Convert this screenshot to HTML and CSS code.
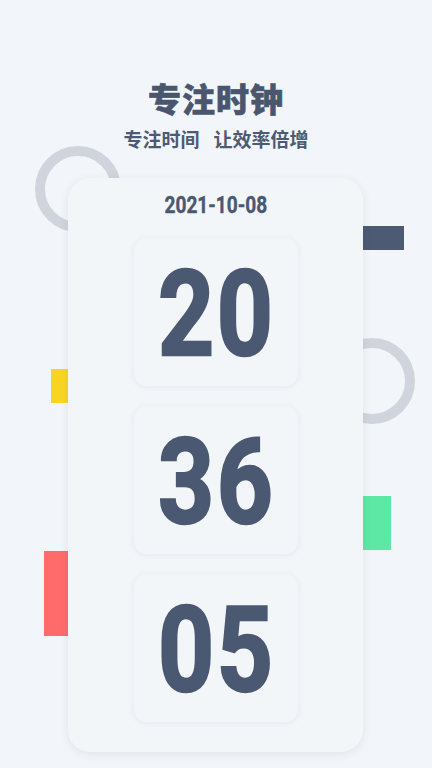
FILE: index.html
```html
<!DOCTYPE html>
<html lang="zh">
<head>
<meta charset="utf-8">
<link rel="stylesheet" href="styles.css">
</head>
<body>
<div class="page">
  <div class="deco ring ring-left"></div>
  <div class="deco ring ring-right"></div>
  <div class="deco bar bar-dark"></div>
  <div class="deco bar bar-yellow"></div>
  <div class="deco bar bar-green"></div>
  <div class="deco bar bar-red"></div>

  <header class="header">
    <h1 class="title">专注时钟</h1>
    <p class="subtitle">专注时间<span class="sp"></span>让效率倍增</p>
  </header>

  <main class="card">
    <div class="date"><span class="narrow">2021-10-08</span></div>
    <div class="digit-box"><span class="digits">20</span></div>
    <div class="digit-box"><span class="digits">36</span></div>
    <div class="digit-box"><span class="digits">05</span></div>
  </main>
</div>
</body>
</html>
```
FILE: styles.css
```css
html, body {
  margin: 0;
  padding: 0;
}
body {
  background: #f2f5f9;
  font-family: "Noto Sans CJK SC", "Noto Sans", sans-serif;
  color: #4b5872;
}
.page {
  position: relative;
  width: 432px;
  height: 768px;
  overflow: hidden;
  display: flex;
  flex-direction: column;
  align-items: center;
}
.header {
  margin-top: 80px;
  display: flex;
  flex-direction: column;
  align-items: center;
  position: relative;
  z-index: 2;
}
.title {
  margin: 0;
  font-size: 33px;
  line-height: 36px;
  font-weight: 900;
  letter-spacing: 1px;
  color: #4a566e;
  -webkit-text-stroke: 0.6px #4a566e;
}
.subtitle {
  margin: 11px 0 0;
  font-size: 19px;
  line-height: 24px;
  font-weight: 700;
  color: #4d5a72;
}
.sp {
  display: inline-block;
  width: 14px;
}
.card {
  position: relative;
  z-index: 2;
  margin-top: 27px;
  margin-left: -1px;
  width: 295px;
  height: 574px;
  box-sizing: border-box;
  border-radius: 22px;
  background: #f3f6f9;
  box-shadow: 0 2px 10px rgba(60, 70, 90, 0.09);
  display: flex;
  flex-direction: column;
  align-items: center;
  padding-top: 14px;
}
.date {
  font-family: Roboto, "Liberation Sans", sans-serif;
  font-weight: 700;
  font-size: 23px;
  line-height: 28px;
  color: #4b5872;
  margin-bottom: 18px;
}
.narrow {
  display: inline-block;
  transform: scaleX(0.83);
  -webkit-text-stroke: 0.4px #4b5872;
}
.digit-box {
  width: 164px;
  height: 148px;
  border-radius: 13px;
  background: #f3f6f9;
  box-shadow: 0 1px 6px rgba(60, 70, 90, 0.08);
  display: flex;
  align-items: center;
  justify-content: center;
  margin-bottom: 20px;
}
.digits {
  display: inline-block;
  font-family: Roboto, "Liberation Sans", sans-serif;
  font-weight: 700;
  font-size: 118px;
  line-height: 1;
  letter-spacing: 3px;
  color: #4b5872;
  -webkit-text-stroke: 2.5px #4b5872;
  transform: scaleX(0.83);
  margin-left: 2px;
  margin-top: 6px;
}
.deco {
  position: absolute;
  z-index: 1;
}
.ring {
  width: 86px;
  height: 86px;
  box-sizing: border-box;
  border: 10px solid #d0d5dd;
  border-radius: 50%;
}
.ring-left {
  left: 35px;
  top: 146px;
}
.ring-right {
  left: 329px;
  top: 338px;
}
.bar-dark {
  left: 360px;
  top: 226px;
  width: 44px;
  height: 24px;
  background: #4c5a73;
}
.bar-yellow {
  left: 51px;
  top: 369px;
  width: 20px;
  height: 34px;
  background: #f9d523;
}
.bar-green {
  left: 360px;
  top: 496px;
  width: 31px;
  height: 54px;
  background: #5ee8a5;
}
.bar-red {
  left: 44px;
  top: 551px;
  width: 27px;
  height: 85px;
  background: #ff6b6b;
}
```
